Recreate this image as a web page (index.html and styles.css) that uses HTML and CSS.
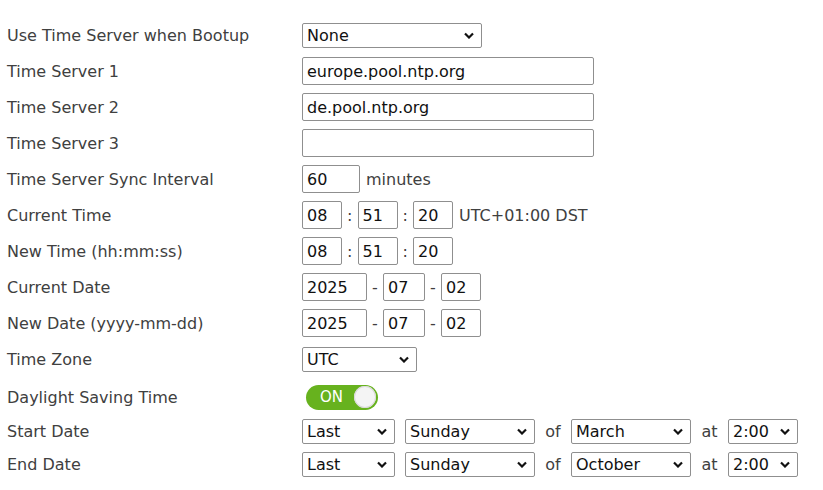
FILE: index.html
```html
<!DOCTYPE html>
<html lang="en">
<head>
  <meta charset="UTF-8" />
  <title>Time Settings</title>
  <link rel="stylesheet" href="styles.css">
</head>
<body>
  <form class="settings">
    <label class="lbl">Use Time Server when Bootup</label>
    <div class="field">
      <span class="sel w-boot"><select><option>None</option></select><svg class="chev" viewBox="0 0 10 6"><path d="M1 1l4 4 4-4"/></svg></span>
    </div>

    <label class="lbl">Time Server 1</label>
    <div class="field"><input class="txt w-server" type="text" value="europe.pool.ntp.org"></div>

    <label class="lbl">Time Server 2</label>
    <div class="field"><input class="txt w-server" type="text" value="de.pool.ntp.org"></div>

    <label class="lbl">Time Server 3</label>
    <div class="field"><input class="txt w-server" type="text" value=""></div>

    <label class="lbl">Time Server Sync Interval</label>
    <div class="field"><input class="txt w-min" type="text" value="60"><span class="unit">minutes</span></div>

    <label class="lbl">Current Time</label>
    <div class="field">
      <input class="txt w-2" type="text" value="08"><span class="sep">:</span>
      <input class="txt w-2" type="text" value="51"><span class="sep">:</span>
      <input class="txt w-2" type="text" value="20"><span class="unit">UTC+01:00 DST</span>
    </div>

    <label class="lbl">New Time (hh:mm:ss)</label>
    <div class="field">
      <input class="txt w-2" type="text" value="08"><span class="sep">:</span>
      <input class="txt w-2" type="text" value="51"><span class="sep">:</span>
      <input class="txt w-2" type="text" value="20">
    </div>

    <label class="lbl">Current Date</label>
    <div class="field">
      <input class="txt w-4" type="text" value="2025"><span class="dash">-</span>
      <input class="txt w-2c" type="text" value="07"><span class="dash">-</span>
      <input class="txt w-2" type="text" value="02">
    </div>

    <label class="lbl">New Date (yyyy-mm-dd)</label>
    <div class="field">
      <input class="txt w-4" type="text" value="2025"><span class="dash">-</span>
      <input class="txt w-2c" type="text" value="07"><span class="dash">-</span>
      <input class="txt w-2" type="text" value="02">
    </div>

    <label class="lbl">Time Zone</label>
    <div class="field">
      <span class="sel w-tz"><select><option>UTC</option></select><svg class="chev" viewBox="0 0 10 6"><path d="M1 1l4 4 4-4"/></svg></span>
    </div>

    <label class="lbl row-dst">Daylight Saving Time</label>
    <div class="field row-dst">
      <span class="toggle"><span class="toggle-text">ON</span><span class="knob"></span></span>
    </div>

    <label class="lbl">Start Date</label>
    <div class="field">
      <span class="sel w-week"><select><option>Last</option></select><svg class="chev" viewBox="0 0 10 6"><path d="M1 1l4 4 4-4"/></svg></span>
      <span class="sel w-day"><select><option>Sunday</option></select><svg class="chev" viewBox="0 0 10 6"><path d="M1 1l4 4 4-4"/></svg></span>
      <span class="word">of</span>
      <span class="sel w-month"><select><option>March</option></select><svg class="chev" viewBox="0 0 10 6"><path d="M1 1l4 4 4-4"/></svg></span>
      <span class="word word-at">at</span>
      <span class="sel w-hour"><select><option>2:00</option></select><svg class="chev" viewBox="0 0 10 6"><path d="M1 1l4 4 4-4"/></svg></span>
    </div>

    <label class="lbl row-end">End Date</label>
    <div class="field row-end">
      <span class="sel w-week"><select><option>Last</option></select><svg class="chev" viewBox="0 0 10 6"><path d="M1 1l4 4 4-4"/></svg></span>
      <span class="sel w-day"><select><option>Sunday</option></select><svg class="chev" viewBox="0 0 10 6"><path d="M1 1l4 4 4-4"/></svg></span>
      <span class="word">of</span>
      <span class="sel w-month"><select><option>October</option></select><svg class="chev" viewBox="0 0 10 6"><path d="M1 1l4 4 4-4"/></svg></span>
      <span class="word word-at">at</span>
      <span class="sel w-hour"><select><option>2:00</option></select><svg class="chev" viewBox="0 0 10 6"><path d="M1 1l4 4 4-4"/></svg></span>
    </div>
  </form>
</body>
</html>
```

FILE: styles.css
```css
body {
  margin: 0;
  background: #fff;
  font-family: "DejaVu Sans", "Liberation Sans", sans-serif;
  color: #333;
}
.settings {
  display: grid;
  grid-template-columns: 295px 1fr;
  grid-auto-rows: 36px;
  padding: 17px 0 0 7px;
}
.lbl {
  font-size: 16px;
  display: flex;
  align-items: center;
  color: #404040;
}
.field {
  display: flex;
  align-items: center;
  font-size: 16px;
  color: #404040;
}
.row-dst { height: 40px; }
.row-end { height: 30px; }
.txt {
  box-sizing: border-box;
  height: 28px;
  border: 1px solid #8f8f8f;
  border-radius: 2px;
  padding: 0 4px;
  font-family: inherit;
  font-size: 16px;
  color: #111;
  background: #fff;
  margin: 0;
}
.w-server { width: 292px; }
.w-min { width: 58px; }
.w-2 { width: 40px; }
.w-2c { width: 42px; }
.w-4 { width: 65px; }
.unit { margin-left: 6px; }
.sep { width: 15.5px; text-align: center; }
.dash { width: 16px; text-align: center; }
.sel {
  position: relative;
  display: inline-block;
  height: 25px;
}
.sel select {
  appearance: none;
  -webkit-appearance: none;
  box-sizing: border-box;
  width: 100%;
  height: 100%;
  border: 1px solid #8f8f8f;
  border-radius: 2px;
  background: #fff;
  font-family: inherit;
  font-size: 16px;
  color: #111;
  padding: 0 4px;
  margin: 0;
}
.chev {
  position: absolute;
  right: 8px;
  top: 9px;
  width: 10px;
  height: 7px;
  fill: none;
  stroke: #111;
  stroke-width: 2.2;
  pointer-events: none;
}
.w-boot { width: 180px; }
.w-tz { width: 115px; }
.w-week { width: 93px; }
.w-day { width: 130px; margin-left: 10px; }
.w-month { width: 120px; }
.w-hour { width: 70px; }
.word {
  width: 36px;
  text-align: center;
}
.word-at { width: 37px; }
.toggle {
  display: flex;
  align-items: center;
  justify-content: space-between;
  width: 72px;
  height: 25px;
  margin-left: 4px;
  border-radius: 13px;
  background: #67b21e;
  box-sizing: border-box;
  padding: 0 2px 0 14px;
}
.toggle-text {
  color: #fff;
  font-size: 15px;
}
.knob {
  width: 22px;
  height: 22px;
  border-radius: 50%;
  background: #f4f4f4;
  box-shadow: inset 0 0 0 1px #d8d8d8;
}
```
